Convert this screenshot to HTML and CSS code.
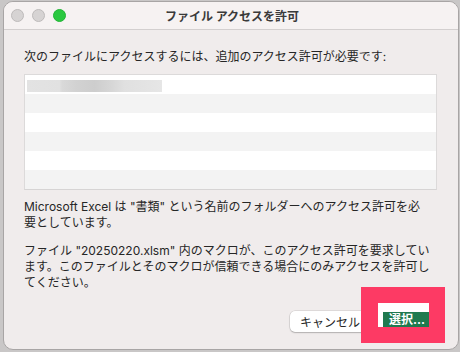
FILE: index.html
```html
<!DOCTYPE html>
<html lang="ja">
<head>
  <meta charset="UTF-8">
  <meta name="viewport" content="width=device-width, initial-scale=1.0">
  <title>ファイル アクセスを許可</title>
  <link rel="stylesheet" href="styles.css">
</head>
<body>
  <div class="window">
    <!-- Title Bar -->
    <div class="titlebar">
      <div class="lights">
        <span class="light"></span>
        <span class="light"></span>
        <span class="light light-green"></span>
      </div>
      <div class="title">ファイル アクセスを許可</div>
      <div></div>
    </div>

    <div class="content">
      <p class="intro">次のファイルにアクセスするには、追加のアクセス許可が必要です:</p>

      <!-- File List -->
      <div class="file-list">
        <div class="row"><span class="blurred"></span></div>
        <div class="row"></div>
        <div class="row"></div>
        <div class="row"></div>
        <div class="row"></div>
        <div class="row"></div>
      </div>

      <p class="message first">Microsoft Excel は "書類" という名前のフォルダーへのアクセス許可を必要としています。</p>
      <p class="message second">ファイル "20250220.xlsm" 内のマクロが、このアクセス許可を要求しています。このファイルとそのマクロが信頼できる場合にのみアクセスを許可してください。</p>

      <div class="buttons">
        <button class="cancel-button">キャンセル</button>
      </div>
    </div>

    <!-- Highlight frame over the default button -->
    <div class="highlight">
      <div class="highlight-inner">
        <span class="highlight-button">選択...</span>
      </div>
    </div>
  </div>
</body>
</html>
```

FILE: styles.css
```css
/* General Styles */
body {
  margin: 0;
  background-color: #c9c7c7;
  font-family: Inter, "Noto Sans CJK JP", sans-serif;
  color: #262626;
}

.window {
  position: relative;
  width: 454px;
  height: 347px;
  margin: 1px 1px 2px 3px;
  border: 1px solid #a8a5a5;
  border-radius: 10px;
  background-color: #f0ecec;
  overflow: hidden;
}

/* Title Bar */
.titlebar {
  display: grid;
  grid-template-columns: 1fr auto 1fr;
  align-items: center;
  height: 27px;
  padding: 0 7px;
  background-color: #f6f2f2;
  border-bottom: 1px solid #d3cfcf;
}

.lights {
  display: flex;
  gap: 8px;
}

.light {
  width: 11px;
  height: 11px;
  border-radius: 50%;
  background-color: #d6d3d3;
  border: 0.5px solid #bdbaba;
}

.light-green {
  background-color: #2ac840;
  border-color: #22b436;
}

.title {
  font-size: 12px;
  font-weight: bold;
  color: #3a3a3a;
  margin-left: 2px;
}

/* Content */
.content {
  padding: 19px 20px 0 20px;
  font-size: 12px;
  line-height: 16px;
}

.intro {
  margin: 0 0 9px 0;
}

.file-list {
  border: 1px solid #dcdada;
  border-bottom-color: #d6d4d4;
  margin-right: 1px;
}

.row {
  height: 19px;
  background-color: #ffffff;
  display: flex;
  align-items: center;
  padding-left: 2px;
}

.row:nth-child(even) {
  background-color: #f3f3f3;
}

.blurred {
  width: 135px;
  height: 12px;
  margin-top: 2px;
  background: linear-gradient(90deg, #e3e3e3 0%, #e1e1e1 24%, #d9d9d9 26%, #d2d2d2 36%, #cdcdcd 50%, #d6d6d6 62%, #e0e0e0 72%, #e6e6e6 100%);
}

.message {
  margin: 9px 0 0 0;
}

.message.first {
  padding-right: 12px;
}

.message.second {
  margin-top: 12px;
}

/* Buttons */
.buttons {
  display: flex;
  justify-content: flex-end;
  margin-top: 20px;
  padding-right: 68px;
}

.cancel-button {
  width: 80px;
  height: 21px;
  padding: 0 10px;
  border: none;
  border-radius: 5px;
  font-family: inherit;
  font-size: 12px;
  background-color: #ffffff;
  color: #262626;
  box-shadow: 0 0 0 0.5px rgba(0, 0, 0, 0.15), 0 1px 1.5px rgba(0, 0, 0, 0.2);
  text-align: left;
}

/* Highlight annotation */
.highlight {
  position: absolute;
  left: 357px;
  top: 285px;
  width: 84px;
  height: 56px;
  background-color: #fd3a64;
}

.highlight-inner {
  position: absolute;
  left: 17px;
  top: 16px;
  width: 51px;
  height: 24px;
  background-color: #ffffff;
}

.highlight-button {
  position: absolute;
  left: 5px;
  top: 9px;
  width: 46px;
  height: 15px;
  background-color: #1f7a4f;
  color: #ffffff;
  font-size: 12px;
  font-weight: bold;
  line-height: 15px;
  padding-left: 6px;
  box-sizing: border-box;
  white-space: nowrap;
  overflow: hidden;
}
```
